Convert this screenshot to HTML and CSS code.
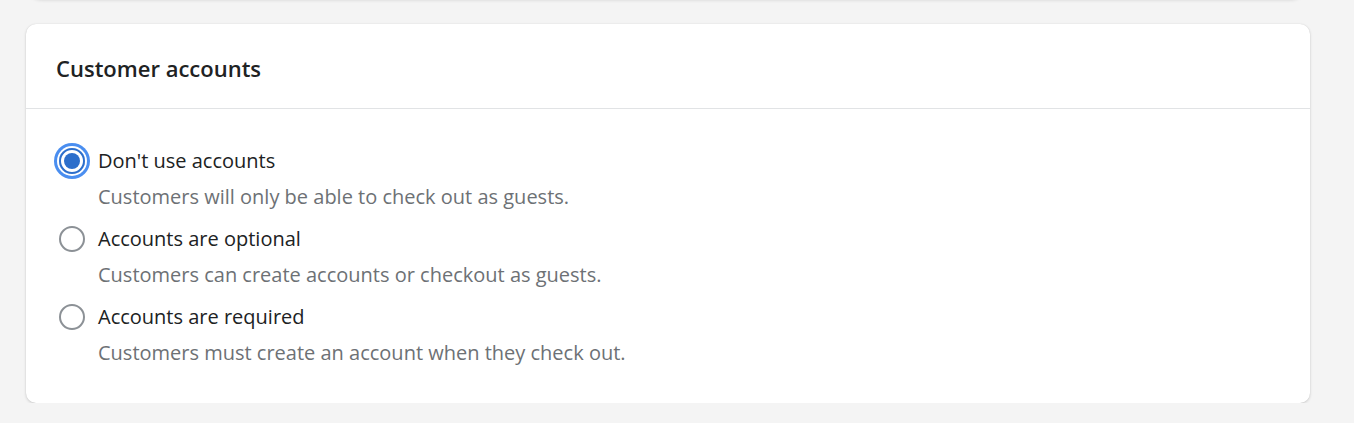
FILE: index.html
```html
<!DOCTYPE html>
<html lang="en">
<head>
    <meta charset="UTF-8">
    <meta name="viewport" content="width=device-width, initial-scale=1.0">
    <title>Customer accounts</title>
    <link rel="stylesheet" href="styles.css">
</head>
<body>
    <div class="page">
        <div class="card card-prev"></div>

        <div class="card">
            <div class="card-header">
                <h2>Customer accounts</h2>
            </div>
            <div class="card-body">
                <label class="option">
                    <input type="radio" name="accounts" checked>
                    <span class="radio radio-checked"></span>
                    <span class="option-text">
                        <span class="option-label">Don't use accounts</span>
                        <span class="option-help">Customers will only be able to check out as guests.</span>
                    </span>
                </label>

                <label class="option">
                    <input type="radio" name="accounts">
                    <span class="radio"></span>
                    <span class="option-text">
                        <span class="option-label">Accounts are optional</span>
                        <span class="option-help">Customers can create accounts or checkout as guests.</span>
                    </span>
                </label>

                <label class="option">
                    <input type="radio" name="accounts">
                    <span class="radio"></span>
                    <span class="option-text">
                        <span class="option-label">Accounts are required</span>
                        <span class="option-help">Customers must create an account when they check out.</span>
                    </span>
                </label>
            </div>
        </div>
    </div>
</body>
</html>
```

FILE: styles.css
```css
html, body {
    margin: 0;
    padding: 0;
    background-color: #f4f4f4;
    font-family: "Open Sans", "Noto Sans", sans-serif;
    color: #202223;
    overflow: hidden;
}

.page {
    width: 1284px;
    padding: 0 0 0 26px;
}

.card {
    background-color: #fff;
    border-radius: 10px;
    box-shadow: 0 1px 3px rgba(0, 0, 0, 0.16), 0 0 1px rgba(0, 0, 0, 0.12);
}

.card-prev {
    height: 20px;
    margin: -22px 8px 26px 4px;
    box-shadow: 0 1px 4px rgba(0, 0, 0, 0.22);
}

.card-header {
    height: 85px;
    box-sizing: border-box;
    padding: 3px 30px 0;
    display: flex;
    align-items: center;
    border-bottom: 1px solid #e1e3e5;
}

.card-header h2 {
    margin: 0;
    font-size: 22px;
    font-weight: 600;
}

.card-body {
    padding: 34px 30px 32px 33px;
}

.option {
    display: flex;
    align-items: flex-start;
    margin-bottom: 6px;
    cursor: pointer;
}

.option:last-child {
    margin-bottom: 0;
}

.option input {
    display: none;
}

.radio {
    width: 22px;
    height: 22px;
    margin: 5px 13px 0 0;
    border: 2px solid #8c9196;
    border-radius: 50%;
    flex-shrink: 0;
    position: relative;
}

.radio-checked {
    border-color: #2c6ecb;
    box-shadow: 0 0 0 2px #fff, 0 0 0 5px #4a8ef0;
}

.radio-checked::after {
    content: "";
    position: absolute;
    top: 3px;
    left: 3px;
    width: 16px;
    height: 16px;
    border-radius: 50%;
    background-color: #2c6ecb;
}

.option-text {
    display: flex;
    flex-direction: column;
}

.option-label {
    font-size: 20px;
    line-height: 36px;
}

.option-help {
    font-size: 20px;
    line-height: 36px;
    color: #6d7175;
}
```
